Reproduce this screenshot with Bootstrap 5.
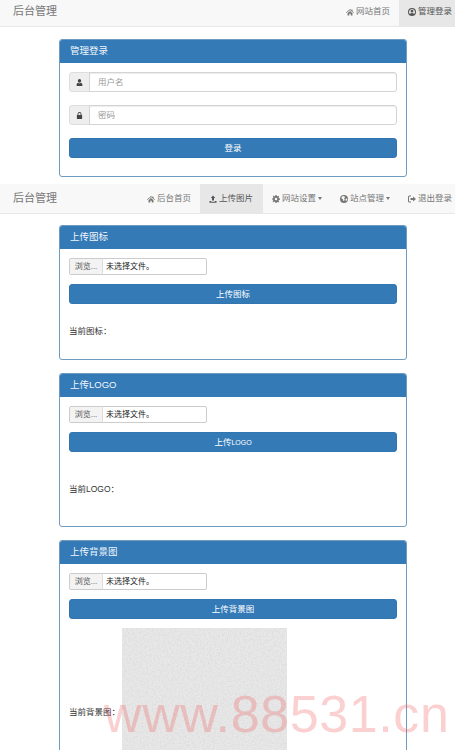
<!DOCTYPE html>
<html lang="en">

<head>
    <meta charset="UTF-8">
    <meta name="viewport" content="width=device-width, initial-scale=1.0">
    <title>后台管理</title>
    <link href="https://cdn.jsdelivr.net/npm/bootstrap@5.3.3/dist/css/bootstrap.min.css" rel="stylesheet">
    <style>
        body { font-family: "Liberation Sans", "Noto Sans CJK SC", sans-serif; font-size: 8.5px; color: #333; background: #fff; }
        .page-clip { height: 750px; overflow: hidden; position: relative; }

        .admin-bar { background: #f8f8f8; border-bottom: 1px solid #e7e7e7; padding: 0 0 0 13px; flex-wrap: nowrap; justify-content: space-between; }
        .bar-one { height: 27px; margin-bottom: 12px; }
        .bar-two { height: 30px; margin-bottom: 11px; }
        .admin-bar .navbar-brand { font-size: 11px; color: #777; padding: 0; margin: 0; line-height: 1; }
        .navbar-expand.admin-bar .navbar-nav .nav-link { font-size: 8.5px; color: #777; padding: 0 9px; height: 100%; display: flex; align-items: center; gap: 2px; white-space: nowrap; }
        .navbar-expand.admin-bar .navbar-nav .nav-link.active { background: #e7e7e7; color: #555; }
        .admin-bar .nav-item { height: 100%; }
        .admin-bar .navbar-nav { height: 100%; flex-direction: row; margin-right: -6px; }
        .bar-one .navbar-brand { margin-bottom: 3px; }
        .navbar-expand.bar-one .navbar-nav .nav-link { padding-bottom: 3px; }
        .navbar-expand.bar-two .navbar-nav .nav-link.active { padding-right: 10px; }
        .admin-bar .dropdown-toggle::after { margin-left: 0; border-width: 3px 2px 0; }
        .nav-ico { width: 8px; height: 8px; fill: currentColor; flex: none; }

        .admin-panel { width: 348px; margin: 0 48px 13px 59px; border: 1px solid #6f9bc0; border-radius: 3px; --bs-card-bg: #fff; }
        .login-panel { margin-bottom: 7px; }
        .admin-panel .card-header { background: #337ab7; color: #f2f6fa; font-size: 9.5px; height: 23px; padding: 0 10px; display: flex; align-items: center; border: 0; border-radius: 2px 2px 0 0; }
        .admin-panel .card-body { padding: 9px; }
        .login-body { height: 113px; }
        .icon-body { height: 110px; }
        .logo-body { height: 129px; }
        .bg-body { height: 260px; }

        .field-row { height: 20px; margin-bottom: 13px; flex-wrap: nowrap; }
        .field-row .input-group-text { width: 21px; padding: 0; justify-content: center; font-size: 8.5px; background: #eee; border-color: #ddd; border-radius: 3px 0 0 3px; color: #555; }
        .field-row .form-control { font-size: 8.5px; padding: 0 8px; border-color: #d4d4d4; border-radius: 0 3px 3px 0; box-shadow: inset 0 1px 1px rgba(0,0,0,.075); min-height: 0; }
        .field-row .form-control::placeholder { color: #999; }
        .field-ico { width: 7px; height: 7px; fill: #444; }

        .submit-btn { display: block; width: 100%; height: 20px; padding: 0; font-size: 8.5px; line-height: 18px; background: #337ab7; border: 1px solid #3176b1; border-radius: 3px; color: #fff; }
        .submit-btn:hover { background: #337ab7; border-color: #3176b1; color: #fff; }
        .logo-word { font-size: 7px; }

        .file-box { width: 138px; height: 17px; border: 1px solid #ccc; border-radius: 2px; margin-bottom: 9px; font-size: 8px; color: #222; align-items: stretch; }
        .file-pick { width: 33px; background: #f3f3f3; border-right: 1px solid #ddd; border-radius: 1px; color: #555; text-align: center; line-height: 15px; }
        .file-name { padding-left: 3px; line-height: 15px; }
        .icon-row { height: 55px; }
        .logo-row { height: 74px; }
        .bg-row { margin-top: 9px; }
        .bg-label { width: 53px; flex: none; padding-top: 78px; }
        .bg-shot { display: block; width: 165px; height: 165px; flex: none; }

        .site-mark { position: absolute; left: 104px; top: 684px; font-family: "Liberation Sans", sans-serif; font-size: 52px; line-height: 60px; letter-spacing: .6px; color: rgba(240, 80, 80, .27); white-space: nowrap; pointer-events: none; }
    </style>
</head>

<body>
    <div class="page-clip">

        <nav class="navbar navbar-expand admin-bar bar-one">
            <a class="navbar-brand" href="#">后台管理</a>
            <ul class="navbar-nav">
                <li class="nav-item">
                    <a class="nav-link" href="#">
                        <svg class="nav-ico" viewBox="0 0 16 16"><path d="M8 2 0 9l1 1 7-6 7 6 1-1-3-2.600V3h-2v1.700zM3 10.500V15h3.500v-3.500h3V15H13v-4.500L8 6z"/></svg>
                        网站首页
                    </a>
                </li>
                <li class="nav-item">
                    <a class="nav-link active" href="#">
                        <svg class="nav-ico" viewBox="0 0 16 16"><path fill-rule="evenodd" d="M8 0a8 8 0 1 0 0 16A8 8 0 0 0 8 0zm0 2a6 6 0 0 1 4.600 9.800C11.600 10.700 10 10 8 10s-3.600.7-4.600 1.800A6 6 0 0 1 8 2zm0 1.500a2.800 2.800 0 1 0 0 5.600 2.800 2.800 0 0 0 0-5.600z"/></svg>
                        管理登录
                    </a>
                </li>
            </ul>
        </nav>

        <div class="card admin-panel login-panel">
            <div class="card-header">管理登录</div>
            <div class="card-body login-body">
                <div class="input-group field-row">
                    <span class="input-group-text">
                        <svg class="field-ico" viewBox="0 0 16 16"><path d="M8 0a3.800 3.800 0 0 0-3.800 4c0 2.200 1.600 4.500 3.800 4.500S11.800 6.200 11.800 4A3.800 3.800 0 0 0 8 0zM5 8.500C3 9 1.500 10 1.500 13v3h13v-3c0-3-1.500-4-3.500-4.500C10 9.800 9 10.300 8 10.300S6 9.800 5 8.500z"/></svg>
                    </span>
                    <input type="text" class="form-control" placeholder="用户名">
                </div>
                <div class="input-group field-row">
                    <span class="input-group-text">
                        <svg class="field-ico" viewBox="0 0 16 16"><path d="M8 0a4.500 4.500 0 0 0-4.500 4.500V7H2v9h12V7h-1.500V4.500A4.500 4.500 0 0 0 8 0zm0 2a2.500 2.500 0 0 1 2.500 2.500V7h-5V4.500A2.500 2.500 0 0 1 8 2z"/></svg>
                    </span>
                    <input type="password" class="form-control" placeholder="密码">
                </div>
                <button type="button" class="btn submit-btn">登录</button>
            </div>
        </div>

        <nav class="navbar navbar-expand admin-bar bar-two">
            <a class="navbar-brand" href="#">后台管理</a>
            <ul class="navbar-nav">
                <li class="nav-item">
                    <a class="nav-link" href="#">
                        <svg class="nav-ico" viewBox="0 0 16 16"><path d="M8 2 0 9l1 1 7-6 7 6 1-1-3-2.600V3h-2v1.700zM3 10.500V15h3.500v-3.500h3V15H13v-4.500L8 6z"/></svg>
                        后台首页
                    </a>
                </li>
                <li class="nav-item">
                    <a class="nav-link active" href="#">
                        <svg class="nav-ico" viewBox="0 0 16 16"><path d="M8 1 3.500 6H6v5h4V6h2.500zM1 12h3v1.500h8V12h3v3.500H1z"/></svg>
                        上传图片
                    </a>
                </li>
                <li class="nav-item dropdown">
                    <a class="nav-link dropdown-toggle" href="#" role="button" data-bs-toggle="dropdown">
                        <svg class="nav-ico" viewBox="0 0 16 16"><path fill-rule="evenodd" d="M6.800 0h2.400l.4 2.200 1.400.6L12.500 1.500l1.900 1.900-1.300 1.900.6 1.400 2.300.5v2.400l-2.300.4-.6 1.400 1.300 1.900-1.900 1.900-1.900-1.300-1.400.6L9.200 16H6.800l-.4-2.300-1.400-.6-1.900 1.300-1.900-1.900 1.300-1.900-.6-1.400L0 9.200V6.800l2.300-.5.6-1.400-1.300-1.900 1.900-1.900L5 2.800l1.400-.6zM8 5.500a2.500 2.500 0 1 0 0 5 2.500 2.500 0 0 0 0-5z"/></svg>
                        网站设置
                    </a>
                </li>
                <li class="nav-item dropdown">
                    <a class="nav-link dropdown-toggle" href="#" role="button" data-bs-toggle="dropdown">
                        <svg class="nav-ico" viewBox="0 0 16 16"><path fill-rule="evenodd" d="M8 0a8 8 0 1 0 0 16A8 8 0 0 0 8 0zM3 4l3-2 3 1 1.500 1.500L8 6.500 9.500 9 8 12l-2-1V8.500L3.500 7.500zm8.500 3.500 2.500-.5.500 2-2 3.500-1.500-2z"/></svg>
                        站点管理
                    </a>
                </li>
                <li class="nav-item">
                    <a class="nav-link" href="#">
                        <svg class="nav-ico" viewBox="0 0 16 16"><path d="M6 1H3a3 3 0 0 0-3 3v8a3 3 0 0 0 3 3h3v-2H3a1 1 0 0 1-1-1V4a1 1 0 0 1 1-1h3zM10 3v3H5v4h5v3l6-5z"/></svg>
                        退出登录
                    </a>
                </li>
            </ul>
        </nav>

        <div class="card admin-panel">
            <div class="card-header">上传图标</div>
            <div class="card-body icon-body">
                <div class="d-flex file-box">
                    <span class="file-pick">浏览...</span>
                    <span class="file-name">未选择文件。</span>
                </div>
                <button type="button" class="btn submit-btn">上传图标</button>
                <div class="d-flex align-items-center icon-row">当前图标：</div>
            </div>
        </div>

        <div class="card admin-panel">
            <div class="card-header">上传LOGO</div>
            <div class="card-body logo-body">
                <div class="d-flex file-box">
                    <span class="file-pick">浏览...</span>
                    <span class="file-name">未选择文件。</span>
                </div>
                <button type="button" class="btn submit-btn">上传<span class="logo-word">LOGO</span></button>
                <div class="d-flex align-items-center logo-row">当前LOGO：</div>
            </div>
        </div>

        <div class="card admin-panel">
            <div class="card-header">上传背景图</div>
            <div class="card-body bg-body">
                <div class="d-flex file-box">
                    <span class="file-pick">浏览...</span>
                    <span class="file-name">未选择文件。</span>
                </div>
                <button type="button" class="btn submit-btn">上传背景图</button>
                <div class="d-flex bg-row">
                    <span class="bg-label">当前背景图：</span>
                    <svg class="bg-shot" viewBox="0 0 165 165" role="img">
                        <filter id="grain">
                            <feTurbulence type="fractalNoise" baseFrequency="0.6" numOctaves="3" seed="4"/>
                            <feColorMatrix values="0 0 0 0 .5  0 0 0 0 .5  0 0 0 0 .5  .55 0 0 0 -.2"/>
                        </filter>
                        <rect width="165" height="165" fill="#e8e8e8"/>
                        <rect width="165" height="165" filter="url(#grain)"/>
                    </svg>
                </div>
            </div>
        </div>

        <div class="site-mark">www.88531.cn</div>
    </div>

    <script src="https://cdn.jsdelivr.net/npm/bootstrap@5.3.3/dist/js/bootstrap.bundle.min.js"></script>
</body>

</html>
